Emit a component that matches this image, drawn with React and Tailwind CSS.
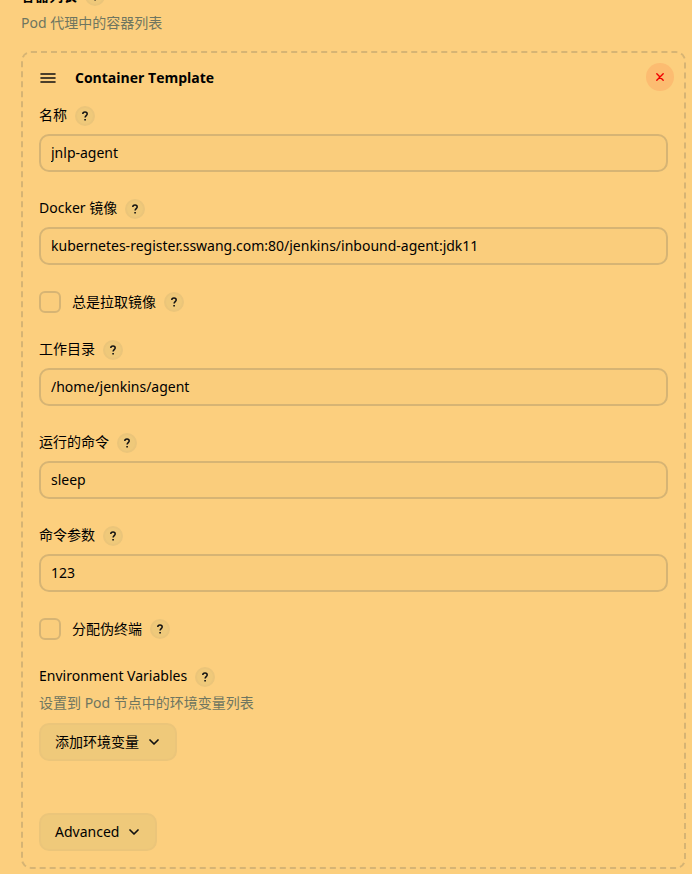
import { useState } from 'react';

function HelpButton({ label }) {
  return (
    <button
      type="button"
      aria-label={`帮助: ${label}`}
      className="flex h-5 w-5 shrink-0 items-center justify-center rounded-full border-2 border-[#ebc57a] bg-[#efc97a]"
    >
      <svg viewBox="0 0 8 10" className="h-[10px] w-2" fill="none" stroke="#111" aria-hidden="true">
        <path d="M1.8 3.1C1.8 1.7 2.7 1 4 1s2.2.8 2.2 2c0 1.6-2.1 1.7-2.1 3.6" strokeWidth="1.5" />
        <path d="M4.1 8v1.6" strokeWidth="1.6" />
      </svg>
    </button>
  );
}

function Chevron() {
  return (
    <svg viewBox="0 0 10 6" className="h-[6px] w-[10px]" fill="none" stroke="#111" strokeWidth="1.7" strokeLinecap="round" strokeLinejoin="round" aria-hidden="true">
      <path d="M1 1l4 4 4-4" />
    </svg>
  );
}

function TextField({ id, label, defaultValue }) {
  return (
    <div className="flex flex-col gap-2">
      <div className="flex h-[21px] items-end gap-2">
        <label htmlFor={id} className="pb-px">{label}</label>
        <HelpButton label={label} />
      </div>
      <input
        id={id}
        type="text"
        defaultValue={defaultValue}
        className="h-[38px] w-full rounded-[10px] border-2 border-[#d6b474] bg-[#facd7c] px-[10px] pb-[2px] outline-none focus:border-[#b8965a]"
      />
    </div>
  );
}

function CheckField({ id, label }) {
  const [checked, setChecked] = useState(false);

  return (
    <div className="flex h-[22px] items-center">
      <input
        id={id}
        type="checkbox"
        checked={checked}
        onChange={(e) => setChecked(e.target.checked)}
        className="h-[22px] w-[22px] shrink-0 appearance-none rounded-md border-2 border-[#d6b474] bg-[#facd7c] checked:bg-[#6f7a62]"
      />
      <label htmlFor={id} className="mr-2 pl-[11px]">{label}</label>
      <HelpButton label={label} />
    </div>
  );
}

function MenuButton({ children }) {
  return (
    <button
      type="button"
      className="flex h-[38px] items-center gap-[10px] self-start rounded-[10px] border-2 border-[#ebc57a] bg-[#efc97a] pr-4 pl-[14px]"
    >
      {children}
      <Chevron />
    </button>
  );
}

export default function App() {
  return (
    <div className="min-h-screen overflow-hidden bg-[#fccf7e] pr-[6px] pb-[5px] pl-[21px] font-['Noto_Sans','Noto_Sans_CJK_SC',sans-serif] text-sm leading-5 text-black">
      {/* section heading, scrolled partly out of view */}
      <div className="-mt-[14px] flex h-5 items-center gap-2">
        <h2 className="font-bold">容器列表</h2>
        <HelpButton label="容器列表" />
      </div>
      <p className="mt-[7px] text-[#6f7660]">Pod 代理中的容器列表</p>

      <section className="mt-[18px] flex flex-col rounded-[10px] border-2 border-dashed border-[#d6b474] px-4 pt-[10px] pb-4">
        <header className="-mr-[6px] flex h-7 items-center">
          <svg viewBox="0 0 18 12" className="h-3 w-[18px]" stroke="#111" strokeWidth="1.6" strokeLinecap="round" aria-hidden="true">
            <path d="M2 3h14M2 7h14M2 11h14" />
          </svg>
          <h3 className="ml-[18px] pt-[2px] font-['Open_Sans',sans-serif] font-bold">Container Template</h3>
          <button type="button" aria-label="删除" className="ml-auto flex h-7 w-7 items-center justify-center rounded-full bg-[#fcbc71]">
            <svg viewBox="0 0 10 10" className="h-[10px] w-[10px]" stroke="#f00000" strokeWidth="1.4" strokeLinecap="round" aria-hidden="true">
              <path d="M1.8 1.8l6.4 6.4M8.2 1.8l-6.4 6.4" />
            </svg>
          </button>
        </header>

        <div className="mt-[14px] flex flex-col gap-[26px]">
          <TextField id="name" label="名称" defaultValue="jnlp-agent" />
          <TextField id="image" label="Docker 镜像" defaultValue="kubernetes-register.sswang.com:80/jenkins/inbound-agent:jdk11" />
          <CheckField id="always-pull" label="总是拉取镜像" />
          <TextField id="workdir" label="工作目录" defaultValue="/home/jenkins/agent" />
          <TextField id="command" label="运行的命令" defaultValue="sleep" />
          <TextField id="args" label="命令参数" defaultValue="123" />
          <CheckField id="tty" label="分配伪终端" />

          <div className="flex flex-col">
            <div className="flex h-[21px] items-end gap-2">
              <span className="pb-px">Environment Variables</span>
              <HelpButton label="Environment Variables" />
            </div>
            <p className="mt-[6px] mb-[10px] text-[#6f7660]">设置到 Pod 节点中的环境变量列表</p>
            <MenuButton>添加环境变量</MenuButton>
          </div>
        </div>

        <div className="mt-[52px] flex">
          <MenuButton>Advanced</MenuButton>
        </div>
      </section>
    </div>
  );
}
